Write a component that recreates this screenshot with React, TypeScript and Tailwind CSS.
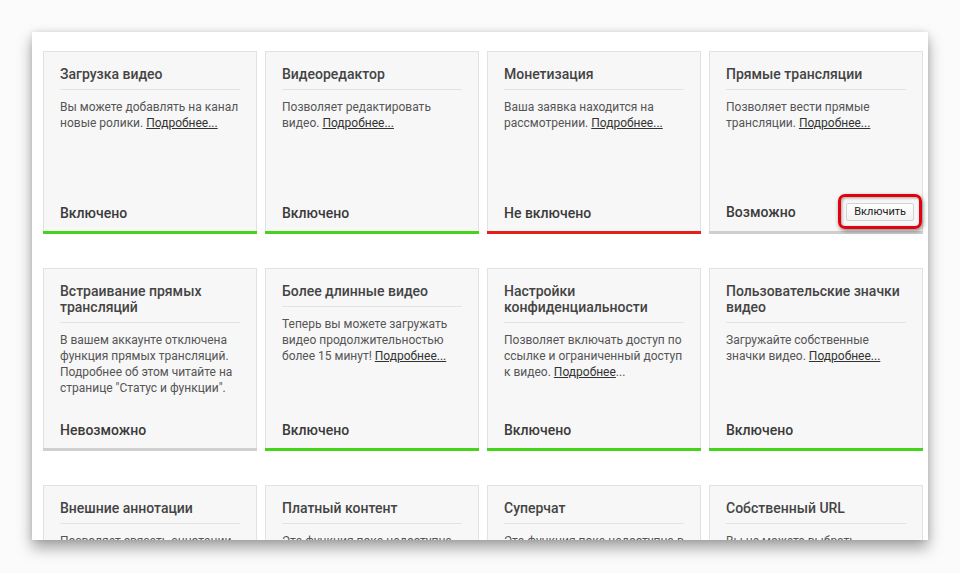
const font = { fontFamily: "Roboto, 'Liberation Sans', sans-serif" };

type Status = "on" | "off" | "none" | "avail";

type Feature = {
  title: string;
  text: string;
  link?: string;
  linkTail?: string;
  status: Status;
};

const statusLabel: Record<Status, string> = {
  on: "Включено",
  off: "Не включено",
  none: "Невозможно",
  avail: "Возможно",
};

const barColor: Record<Status, string> = {
  on: "bg-[#46d31b]",
  off: "bg-[#e5201a]",
  none: "bg-[#cfcfcf]",
  avail: "bg-[#cfcfcf]",
};

const features: Feature[] = [
  { title: "Загрузка видео", text: "Вы можете добавлять на канал новые ролики. ", link: "Подробнее...", status: "on" },
  { title: "Видеоредактор", text: "Позволяет редактировать видео. ", link: "Подробнее...", status: "on" },
  { title: "Монетизация", text: "Ваша заявка находится на рассмотрении. ", link: "Подробнее...", status: "off" },
  { title: "Прямые трансляции", text: "Позволяет вести прямые трансляции. ", link: "Подробнее...", status: "avail" },
  {
    title: "Встраивание прямых трансляций",
    text: "В вашем аккаунте отключена функция прямых трансляций. Подробнее об этом читайте на странице \"Статус и функции\".",
    status: "none",
  },
  { title: "Более длинные видео", text: "Теперь вы можете загружать видео продолжительностью более 15 минут! ", link: "Подробнее...", status: "on" },
  {
    title: "Настройки конфиденциальности",
    text: "Позволяет включать доступ по ссылке и ограниченный доступ к видео. ",
    link: "Подробнее",
    linkTail: "...",
    status: "on",
  },
  { title: "Пользовательские значки видео", text: "Загружайте собственные значки видео. ", link: "Подробнее...", status: "on" },
  { title: "Внешние аннотации", text: "Позволяет связать аннотации с вашим сайтом.", status: "on" },
  { title: "Платный контент", text: "Эта функция пока недоступна для вашего канала.", status: "none" },
  { title: "Суперчат", text: "Эта функция пока недоступна в вашей стране.", status: "none" },
  { title: "Собственный URL", text: "Вы не можете выбрать собственный URL.", status: "none" },
];

function FeatureCard({ f }: { f: Feature }) {
  return (
    <div className="flex h-[183px] flex-col">
      <div className="flex flex-1 flex-col border-x border-t border-[#e2e2e2] bg-[#f7f7f7] px-4 pt-[14px] pb-[10px]">
        <h3 className="border-b border-[#e3e3e3] pb-[7px] text-[14px] leading-4 font-medium text-[#444]">
          {f.title}
        </h3>
        <p className="mt-[9px] text-[12px] leading-4 text-[#555]">
          {f.text}
          {f.link && <a className="text-[#333] underline underline-offset-1">{f.link}</a>}
          {f.linkTail}
        </p>
        <div className="mt-auto flex items-center justify-between">
          <span className="text-[14px] leading-4 font-medium text-[#3b3b3b]">{statusLabel[f.status]}</span>
          {f.status === "avail" && (
            <div className="relative mr-[-8px] flex">
              <button
                type="button"
                className="h-[18px] rounded-[2px] border border-[#d3d3d3] bg-gradient-to-b from-white to-[#f3f3f3] px-[7px] text-[11px] leading-4 text-[#222]"
              >
                Включить
              </button>
              {/* red highlight drawn over the button */}
              <span className="pointer-events-none absolute -inset-x-[8px] -top-[9px] -bottom-[8px] rounded-[7px] border-[3px] border-[#e3000f] shadow-[1px_2px_4px_rgba(0,0,0,0.45),inset_1px_1px_3px_rgba(0,0,0,0.35)]" />
            </div>
          )}
        </div>
      </div>
      <div className={`h-[3px] ${barColor[f.status]}`} />
    </div>
  );
}

export default function App() {
  return (
    <div className="h-[573px] w-[960px] bg-[#fbfbfb] pt-8 pl-8" style={font}>
      <div className="h-[508px] w-[896px] overflow-hidden bg-white pt-[19px] pl-[11px] shadow-[0_8px_14px_rgba(0,0,0,0.35),0_0_6px_rgba(0,0,0,0.12)]">
        <div className="grid grid-cols-[repeat(4,214px)] gap-x-2 gap-y-[34px]">
          {features.map((f) => (
            <FeatureCard key={f.title} f={f} />
          ))}
        </div>
      </div>
    </div>
  );
}
